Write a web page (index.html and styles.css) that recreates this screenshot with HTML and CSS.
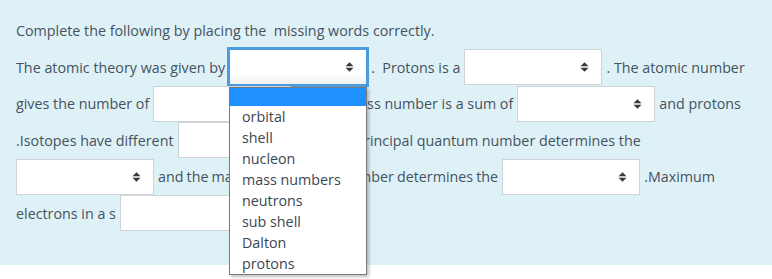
FILE: index.html
```html
<!DOCTYPE html>
<html lang="en">
<head>
    <title>Select missing words</title>
    <meta charset="UTF-8">
    <link rel="stylesheet" href="styles.css">
</head>
<body>
    <div class="formulation">
        <div class="qtext">Complete the following by placing the  missing words correctly.</div>

        <div class="line">
            <span>The atomic theory was given by</span>
            <select class="gap focused"><option></option></select>
            <span>.  Protons is a</span>
            <select class="gap"><option></option></select>
            <span>. The atomic number</span>
        </div>
        <div class="line">
            <span>gives the number of</span>
            <select class="gap"><option></option></select>
            <span>.     The mass number is a sum of</span>
            <select class="gap"><option></option></select>
            <span>and protons</span>
        </div>
        <div class="line">
            <span>.Isotopes have different</span>
            <select class="gap"><option></option></select>
            <span>. The principal quantum number determines the</span>
        </div>
        <div class="line">
            <select class="gap"><option></option></select>
            <span class="tight">and the magnetic quantum number determines the</span>
            <select class="gap"><option></option></select>
            <span>.Maximum</span>
        </div>
        <div class="line">
            <span>electrons in a s</span>
            <select class="gap"><option></option></select>
        </div>

        <!-- open list of the first gap -->
        <ul class="dropdown">
            <li class="active"></li>
            <li>orbital</li>
            <li>shell</li>
            <li>nucleon</li>
            <li>mass numbers</li>
            <li>neutrons</li>
            <li>sub shell</li>
            <li>Dalton</li>
            <li>protons</li>
        </ul>
    </div>
</body>
</html>
```
FILE: styles.css
```css
* {
    margin: 0;
    padding: 0;
    box-sizing: border-box;
}

html, body {
    height: 100%;
}

body {
    font-family: 'Open Sans', sans-serif;
    font-size: 14.3px;
    color: #46525e;
    background: #fff;
}

.formulation {
    position: relative;
    background-color: #def1f7;
    height: 265px;
    padding: 20px 16px 0;
}

.qtext {
    line-height: 21px;
    height: 29px;
    white-space: pre;
}

.line {
    display: flex;
    align-items: center;
    height: 36.5px;
    white-space: pre;
}

.tight {
    word-spacing: -0.6px;
}

.gap {
    appearance: none;
    -webkit-appearance: none;
    flex: none;
    width: 138px;
    height: 36px;
    margin: 0 4px;
    border: 1px solid #ced4da;
    border-radius: 0;
    background: #fff url("data:image/svg+xml,%3Csvg xmlns='http://www.w3.org/2000/svg' width='9' height='10'%3E%3Cpath d='M0.5 4.2L4.5 0.2L8.5 4.2Z M0.5 5.8L4.5 9.8L8.5 5.8Z' fill='%23343a40'/%3E%3C/svg%3E") no-repeat right 12px center;
    font-family: inherit;
    font-size: 14px;
    outline: none;
}

.line > .gap:first-child {
    margin-left: 0;
}

.gap.focused {
    border-color: #4b9be0;
    box-shadow: 0 0 0 2px #4b9be0;
    background-color: #fff;
    background-image: url("data:image/svg+xml,%3Csvg xmlns='http://www.w3.org/2000/svg' width='9' height='10'%3E%3Cpath d='M0.5 4.2L4.5 0.2L8.5 4.2Z M0.5 5.8L4.5 9.8L8.5 5.8Z' fill='%23343a40'/%3E%3C/svg%3E"), linear-gradient(#fff 70%, #f1f1f1);
    background-repeat: no-repeat;
    background-position: right 12px center, 0 0;
}

/* the open option list */
.dropdown {
    position: absolute;
    left: 229px;
    top: 87px;
    z-index: 10;
    width: 138px;
    list-style: none;
    background: #fff;
    border: 1px solid #7a7a7a;
    box-shadow: 2px 2px 3px rgba(0, 0, 0, 0.25);
    color: #3c4650;
    font-size: 14.3px;
}

.dropdown li {
    height: 21px;
    line-height: 21px;
    padding-left: 12px;
}

.dropdown li.active {
    height: 18px;
    background-color: #1e90ff;
}
```
